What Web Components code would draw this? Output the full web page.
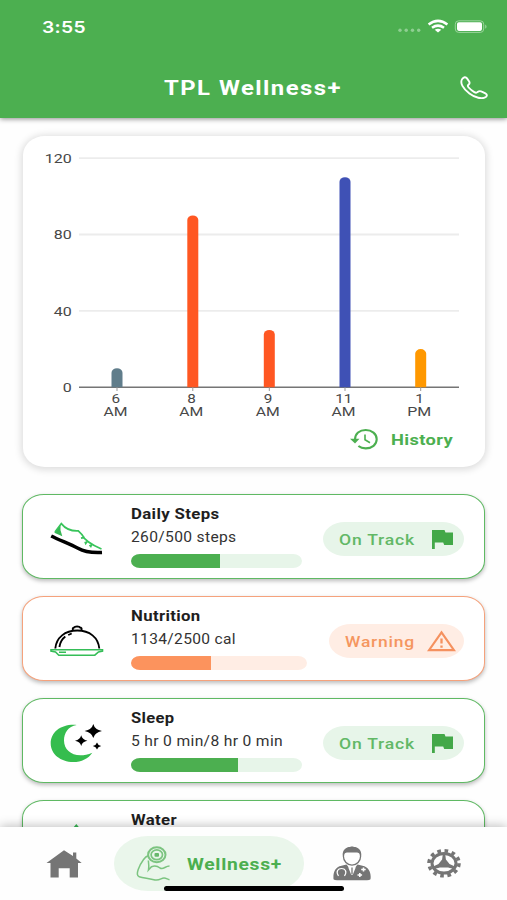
<!DOCTYPE html>
<html lang="en">
<head>
<meta charset="utf-8">
<title>TPL Wellness+</title>
<style>
    html, body {
        margin:0;
        height:100%;
        background:#fefefe;
        font-family:Roboto, "Liberation Sans", sans-serif;
    }
    body {
        width:507px;
        height:900px;
        overflow:hidden;
    }
</style>
</head>
<body>
<wellness-app></wellness-app>

<script>
//ICONS - name: [viewBox, markup]
const ICONS = {
    status: ["0 0 92 19", `
        <g fill="#8fcf92"><circle cx="3" cy="13.3" r="1.7"/><circle cx="9.2" cy="13.3" r="1.7"/><circle cx="15.5" cy="13.3" r="1.7"/><circle cx="21.7" cy="13.3" r="1.7"/></g>
        <g fill="none" stroke="#fff" stroke-width="2.5"><path d="M31.6 7.4Q41 0.3 50.4 7.4"/><path d="M35 10.8Q41 6.4 47 10.8"/></g>
        <path d="M37.7 12.7Q41 10.6 44.3 12.7L41 15.6z" fill="#fff"/>
        <rect x="58.3" y="3.8" width="28.4" height="11.6" rx="3.4" fill="none" stroke="#9bd49d"/>
        <rect x="60" y="5.2" width="25" height="8.7" rx="1.8" fill="#fff"/>
        <path d="M88.2 7.4Q91 9.5 88.2 11.7z" fill="#9bd49d"/>`],
    phone: ["0 0 28 23", `<path d="M2.2 3C3.6 1 5.8.7 7 2.4L9 5.3c1 1.5.6 2.6-.5 3.5-1 .8-.8 1.5.2 2.7 1.7 2 3.3 3.3 5.6 4.6 1.4.8 2.2.9 3.2 0 1.3-1.1 2.800-1.3 4.300-.5l3.600 1.7c1.900 1 1.900 2.500.4 3.700C22 23.600 15 21.600 9.400 17.400 3 12.600-.4 6.800 2.200 3z" fill="none" stroke="#fff" stroke-width="1.9" stroke-linejoin="round"/>`],
    history: ["0 0 29 22", `
        <g fill="none" stroke="#4caf50" stroke-width="2.1"><path d="M5 11.5C5 5.5 9.600 2 15.700 2S26.700 6 26.700 11.300 22 20.400 15.700 20.400c-3 0-5.400-.8-7.300-2.400"/><path d="M15 6.500v5.300l5 2.900" stroke-width="1.600"/></g>
        <path d="M0 10.800h9.500L5 15.400z" fill="#4caf50"/>`],
    flag: ["0 0 21 19", `<path d="M0 0h12.500l1 2.400H21v12.700h-8.800l-1-2.500H2.800V19H0z" fill="#43a848"/>`],
    warning: ["0 0 29 22", `<path d="M14.500 2.400L27 20.200H2z" fill="none" stroke="#f5915f" stroke-width="2.200"/><path d="M14.500 8.500v5M14.500 15.500v2.200" stroke="#f5915f" stroke-width="2.300"/>`],
    shoe: ["0 0 54 45", `
        <path d="M1.200 22C10 26.400 20 30 28 34.300c6 3.500 13 4.800 24 4.200" fill="none" stroke="#000" stroke-width="3.500"/>
        <path d="M10.500 11L4.300 18.700l8 3.600-1.800-6z" fill="#38b755"/>
        <path d="M5 18L11.300 9.600C16 15.500 21 17.300 28.300 16.900L31.800 20.400C34.500 26.500 42 31 51.500 35M31 24.200l3.600-.8M35 27.800l.7 1.700 1.800-2.400M39.500 31l1.300 1.400 1.300-2.800" fill="none" stroke="#38c45b" stroke-width="1.700"/>`],
    cloche: ["0 0 54 45", `
        <g fill="none" stroke="#000" stroke-width="1.900"><path d="M5.300 32.500C6.300 21.500 15 14.500 27.300 14.500S48.300 21.500 49.300 32.500"/><path d="M22.900 14.300c-.6-2 .4-2.900 1.600-2.900.2-1.300 5-1.300 5.200 0 1.400 0 2.400 1 1.700 2.900"/><path d="M9.400 31c.6-4.500 2.500-8 5.900-10.500M18.200 19l3.500-1.500"/></g>
        <path d="M1 33.700h51.500v1.500l-4 .8-3.700 3.200H8.800L5.500 36 1 35.200zM9 36.300h7" fill="none" stroke="#35bd57" stroke-width="1.600"/>`],
    moon: ["0 0 54 45", `
        <path d="M26.700 7C18 8.500 14 15 14 22.500 14 34 26 41.500 42.300 34.700 38.500 40.500 31.500 44 23.300 44 10.500 44 .7 36 .7 25.500.7 14 11.500 5.700 26.700 7z" fill="#35bd4e"/>
        <path d="M43.300 6q1.500 5.700 8.700 7-7.200 1.300-8.700 7-1.500-5.700-8.700-7 7.200-1.300 8.700-7zM31.200 17.300q1 4.300 6.200 5.400-5.200 1-6.200 5.300-1-4.300-6.200-5.300 5.200-1.100 6.200-5.400zM47 24.500q.8 2.800 4.200 3.500-3.400.7-4.200 3.500-.8-2.800-4.200-3.500 3.400-.7 4.200-3.500z"/>`],
    drop: ["0 0 54 45", `<path d="M26.300 4C32 11 39 18 39 27a12.700 12 0 0 1-25.400 0C13.600 18 20.600 11 26.300 4z" fill="#38b755"/>`],
    home: ["0 0 36 36", `<path d="M18 4.200L27 10V6.500h3.300v6L35.700 17H32v14.500h-8.300V22.300h-11v9.200H4.500V17H.5z" fill="#757575"/>`],
    arm: ["0 0 36 36", `<g fill="none" stroke="#7cc480" stroke-width="1.500">
        <path d="M12.500 9.500C8 11 5 16.500 2.200 23.500 1 27 .8 30 3.200 30.700 8 32 14 32.500 19 34c5 .8 6-2 9-2 2.400 0 3 1 5.500 1.700M12.300 14.500c.5 3.500 1 6 .2 9.500l3-3.300c4-1.500 6.500-.3 8.500 1.300 3.500 2 5-2 9.500-2"/>
        <ellipse cx="20.800" cy="8.800" rx="8.700" ry="7.500" stroke-width="2"/><ellipse cx="20.800" cy="8.800" rx="5.700" ry="4.900" stroke-width="1.700"/></g>
        <rect x="18.500" y="6.900" width="4.500" height="3.900" rx="1" fill="#68b86c"/>`],
    doctor: ["0 0 38 36", `
        <path d="M.5 33.200C0 27 1.800 21 8.500 19.800L13.500 18.500 19 25.500 24.500 18.500 29.500 19.800C36 21 38.400 27 37.500 33.200Q36.500 34.200 34 34.200H4Q1.500 34.200.5 33.200z" fill="#757575"/>
        <path d="M15.500 19l3.500 2.500 3.500-2.500v3L19.700 29h-1.400L15.500 22z" fill="#fefefe"/>
        <path d="M19 21.500v7" stroke="#757575" stroke-width="1.300"/>
        <ellipse cx="19" cy="10.200" rx="8.600" ry="9" fill="#fefefe" stroke="#757575" stroke-width="1.300"/>
        <path d="M9.700 9.500C9.300 3.500 13 .7 19 .7S28.700 3.500 28.300 9.500C26 5.500 22.500 6.500 19 6.500S12 5.500 9.700 9.500z" fill="#757575"/>
        <path d="M5.500 30c-3-4.500-.5-7.500 3-7.500s6 3 3 7.500" fill="none" stroke="#fefefe" stroke-width="1.200"/>
        <path d="M26.800 27v4M24.500 29h4.600M30.500 21.500v4M28.200 23.500h4.500" stroke="#fefefe" stroke-width="1.600"/>`],
    gear: ["0 0 36 36", `
        <ellipse cx="18" cy="17.300" rx="15" ry="12.500" fill="none" stroke="#757575" stroke-width="3.600" stroke-dasharray="3.600 3.630"/>
        <ellipse cx="18" cy="17.300" rx="12" ry="9.800" fill="none" stroke="#757575" stroke-width="3"/>
        <path d="M16.800 8h2.400l.7 5.500 3.600 4.500 6 2.700-1.500 2.400-6-1.600h-8l-6 1.600-1.500-2.400 6-2.700 3.600-4.500z" fill="#757575"/>`]
};

//One icon, drawn at the size of its viewBox
class AppIcon extends HTMLElement {
    constructor(){
        super();
        this.attachShadow({mode:"open"});
    }
    connectedCallback(){
        const [box, markup] = ICONS[this.getAttribute("name")];
        const [, , w, h] = box.split(" ");
        this.shadowRoot.innerHTML = `
        <style>
            :host { display:block; flex:none; width:${w}px; height:${h}px; }
            svg { display:block; }
        </style>
        <svg width="${w}" height="${h}" viewBox="${box}">${markup}</svg>`;
    }
}
customElements.define("app-icon", AppIcon);

//A line of text stretched to a set width, capitals centred in its height
class WideText extends HTMLElement {
    constructor(){
        super();
        this.attachShadow({mode:"open"});
    }
    connectedCallback(){
        const w = this.getAttribute("width");
        const size = this.getAttribute("size");
        this.shadowRoot.innerHTML = `
        <style>
            :host { display:block; flex:none; width:${w}px; height:22px; }
            svg { display:block; overflow:visible; }
            text { font-size:${size}px; fill:currentColor; letter-spacing:var(--spacing, .3px); }
        </style>
        <svg width="${w}" height="22"><text x="0" y="${11 + size * 0.355}" textLength="${w}" lengthAdjust="spacingAndGlyphs"></text></svg>`;
        this.shadowRoot.querySelector("text").textContent = this.getAttribute("text");
    }
}
customElements.define("wide-text", WideText);

//Status bar and title
const template_header = document.createElement("template");
template_header.innerHTML = `
<style>
    :host {
        display:flex;
        flex-direction:column;
        height:118px;
        background:#4caf50;
        color:#fff;
        box-shadow:0 1px 5px rgba(0,0,0,.45);
        position:relative;
        z-index:2;
    }
    .status {
        display:flex;
        justify-content:space-between;
        align-items:center;
        height:53px;
        padding:0 18px 0 42px;
    }
    .time { font-family:Inter, sans-serif; font-weight:600; }
    .title {
        display:grid;
        grid-template-columns:1fr auto 1fr;
        align-items:center;
        height:61px;
        padding:4px 19px 0 18px;
        font-weight:700;
        --spacing:1.2px;
    }
    .title app-icon { justify-self:end; }
</style>
<div class="status">
    <wide-text class="time" text="3:55" size="16.5" width="44"></wide-text>
    <app-icon name="status"></app-icon>
</div>
<div class="title">
    <span></span>
    <wide-text text="TPL Wellness+" size="19.5" width="178"></wide-text>
    <app-icon name="phone"></app-icon>
</div>
`;
class AppHeader extends HTMLElement {
    constructor(){
        super();
        this.attachShadow({mode:"open"});
        this.shadowRoot.appendChild(template_header.content.cloneNode(true));
    }
}
customElements.define("app-header", AppHeader);

//Bar chart card
const BARS = [
    {x:94, value:10, hour:"6", half:"AM", color:"#607d8b"},
    {x:169.8, value:90, hour:"8", half:"AM", color:"#ff5722"},
    {x:246.3, value:30, hour:"9", half:"AM", color:"#ff5722"},
    {x:322, value:110, hour:"11", half:"AM", color:"#3f51b5"},
    {x:397.7, value:20, hour:"1", half:"PM", color:"#ff9800"}
];
class ChartCard extends HTMLElement {
    constructor(){
        super();
        this.attachShadow({mode:"open"});
    }
    connectedCallback(){
        const yOf = v => 251.3 - v * 1.91;
        let marks = "";
        for (const v of [120, 80, 40, 0]) {
            const w = String(v).length * 9;
            marks += `<path d="M56 ${yOf(v)}H436" stroke="${v ? "#ececec" : "#757575"}" stroke-width="${v ? 1.8 : 1.6}"/>
            <text x="${48.8 - w}" y="${yOf(v) + 4.6}" textLength="${w}" lengthAdjust="spacingAndGlyphs">${v}</text>`;
        }
        for (const b of BARS) {
            const top = yOf(b.value);
            const hw = b.hour.length * 8.6;
            marks += `<path d="M${b.x} 251v4" stroke="#999"/>
            <path d="M${b.x - 5.5} 251.3V${top + 4.5}a5.5 4.5 0 0 1 11 0V251.3z" fill="${b.color}"/>
            <text x="${b.x - hw / 2 - 1.2}" y="266.8" textLength="${hw}" lengthAdjust="spacingAndGlyphs">${b.hour}</text>
            <text x="${b.x - 13.5}" y="280" textLength="24" lengthAdjust="spacingAndGlyphs">${b.half}</text>`;
        }
        this.shadowRoot.innerHTML = `
        <style>
            :host {
                display:flex;
                flex-direction:column;
                box-sizing:border-box;
                height:331px;
                border-radius:22px / 19px;
                background:#fff;
                box-shadow:0 1px 7px 2px rgba(0,0,0,.13);
            }
            svg { display:block; }
            text { font-size:13.2px; fill:#484848; }
            .history {
                display:flex;
                justify-content:flex-end;
                align-items:center;
                gap:12px;
                height:35px;
                padding-right:32px;
                color:#4caf50;
                font-weight:700;
            }
        </style>
        <svg width="462" height="285">${marks}</svg>
        <div class="history">
            <app-icon name="history"></app-icon>
            <wide-text text="History" size="15.5" width="62"></wide-text>
        </div>`;
    }
}
customElements.define("chart-card", ChartCard);

//Coloured pill with a word and an icon, passed in the slot
const template_pill = document.createElement("template");
template_pill.innerHTML = `
<style>
    :host {
        display:flex;
        align-items:center;
        justify-content:space-between;
        box-sizing:border-box;
        height:34px;
        border-radius:22px / 17px;
        background:var(--tint);
        color:var(--pill-text);
        font-weight:500;
        --spacing:.7px;
    }
</style>
<slot></slot>
`;
class StatusPill extends HTMLElement {
    constructor(){
        super();
        this.attachShadow({mode:"open"});
        this.shadowRoot.appendChild(template_pill.content.cloneNode(true));
    }
}
customElements.define("status-pill", StatusPill);

//Card for one goal, value and pill only when it has a value
class GoalCard extends HTMLElement {
    constructor(){
        super();
        this.attachShadow({mode:"open"});
    }
    connectedCallback(){
        const a = n => this.getAttribute(n);
        const warn = this.hasAttribute("warn");
        const pill = warn
            ? `<status-pill style="width:135px;padding:0 8px 0 16px"><wide-text text="Warning" size="15.5" width="70"></wide-text><app-icon name="warning"></app-icon></status-pill>`
            : `<status-pill style="width:141px;padding:0 11px 0 16px"><wide-text text="On Track" size="15.5" width="76"></wide-text><app-icon name="flag"></app-icon></status-pill>`;
        const progress = `
            <wide-text class="value" text="${a("value")}" size="14" width="${a("value-width")}"></wide-text>
            <div class="bar"><div class="fill"></div></div>`;
        this.shadowRoot.innerHTML = `
        <style>
            :host {
                display:flex;
                flex:none;
                box-sizing:border-box;
                width:463px;
                height:85px;
                padding:0 20px 0 27px;
                border:1.5px solid var(--line);
                border-radius:22px / 18px;
                background:#fff;
                box-shadow:0 2px 4px rgba(0,0,0,.27);
                --line:#5fb963;
                --main:#4caf50;
                --tint:#e7f5e9;
                --pill-text:#62b866;
            }
            :host([warn]) {
                --line:#f5a27c;
                --main:#fc935d;
                --tint:#ffede4;
                --pill-text:#f5965f;
            }
            .icon { margin-top:19px; width:80.5px; }
            .info { flex:1; margin-top:8px; color:#1e1e1e; }
            .title { font-weight:700; }
            .value { margin-top:1px; color:#333; }
            .bar {
                width:${a("bar")}px;
                height:14px;
                margin-top:5.5px;
                border-radius:9px / 7px;
                overflow:hidden;
                background:var(--tint);
            }
            .fill { height:100%; width:${a("fill")}px; background:var(--main); }
            status-pill { margin-top:27px; }
        </style>
        <div class="icon"><app-icon name="${a("icon")}"></app-icon></div>
        <div class="info">
            <wide-text class="title" text="${a("title-text")}" size="14.5" width="${a("title-width")}"></wide-text>
            ${a("value") ? progress : ""}
        </div>
        ${a("value") ? pill : ""}`;
    }
}
customElements.define("goal-card", GoalCard);

//Bottom navigation
const template_nav = document.createElement("template");
template_nav.innerHTML = `
<style>
    :host {
        display:block;
        height:73px;
        flex:none;
        background:#fefefe;
        box-shadow:0 -1px 10px rgba(0,0,0,.26);
        position:relative;
        z-index:2;
    }
    .row { display:flex; align-items:center; padding:9px 0 0 46px; }
    .active {
        display:flex;
        align-items:center;
        gap:15px;
        box-sizing:border-box;
        width:190px;
        height:55px;
        margin:0 29px 0 32px;
        padding-left:22px;
        border-radius:34px / 27px;
        background:#eaf6eb;
        color:#4caf50;
        font-weight:700;
        --spacing:.6px;
    }
    .gear { margin-left:55px; }
    /* home indicator lies over the row */
    .indicator {
        position:absolute;
        left:164px;
        bottom:9px;
        width:180px;
        height:5.5px;
        border-radius:3px;
        background:#000;
    }
</style>
<div class="row">
    <app-icon name="home"></app-icon>
    <div class="active">
        <app-icon name="arm"></app-icon>
        <wide-text text="Wellness+" size="16" width="95"></wide-text>
    </div>
    <app-icon name="doctor"></app-icon>
    <app-icon class="gear" name="gear"></app-icon>
</div>
<div class="indicator"></div>
`;
class AppNav extends HTMLElement {
    constructor(){
        super();
        this.attachShadow({mode:"open"});
        this.shadowRoot.appendChild(template_nav.content.cloneNode(true));
    }
}
customElements.define("app-nav", AppNav);

//The whole screen
const template_app = document.createElement("template");
template_app.innerHTML = `
<style>
    :host {
        display:flex;
        flex-direction:column;
        width:507px;
        height:900px;
        overflow:hidden;
    }
    main {
        flex:1;
        min-height:0;
        box-sizing:border-box;
        padding:18px 22px 0;
        overflow:hidden;
    }
    chart-card { margin:0 0 0 1px; width:462px; }
    .goals { display:flex; flex-direction:column; gap:17px; margin-top:27px; }
</style>
<app-header></app-header>
<main>
    <chart-card></chart-card>
    <div class="goals">
        <goal-card icon="shoe" title-text="Daily Steps" title-width="88.5" value="260/500 steps" value-width="105.5" bar="171" fill="89"></goal-card>
        <goal-card warn icon="cloche" title-text="Nutrition" title-width="69.5" value="1134/2500 cal" value-width="105" bar="176" fill="80"></goal-card>
        <goal-card icon="moon" title-text="Sleep" title-width="43.5" value="5 hr 0 min/8 hr 0 min" value-width="152" bar="171" fill="107"></goal-card>
        <goal-card icon="drop" title-text="Water" title-width="46"></goal-card>
    </div>
</main>
<app-nav></app-nav>
`;
class WellnessApp extends HTMLElement {
    constructor(){
        super();
        this.attachShadow({mode:"open"});
        this.shadowRoot.appendChild(template_app.content.cloneNode(true));
    }
}
customElements.define("wellness-app", WellnessApp);
</script>
</body>
</html>
